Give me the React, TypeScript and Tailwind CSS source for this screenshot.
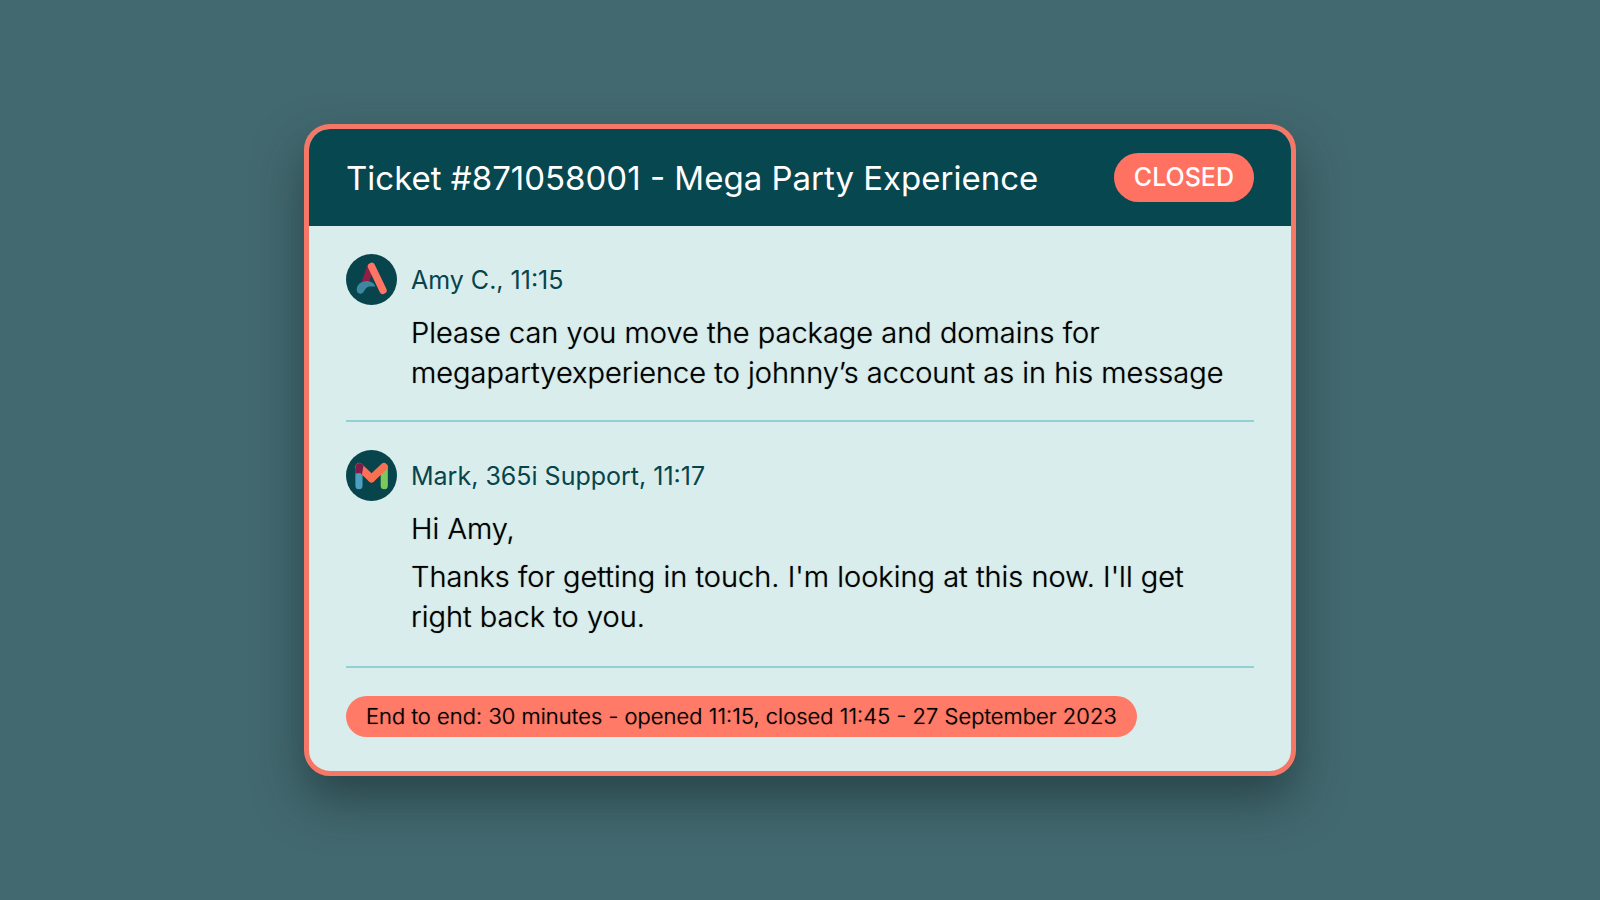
import type { ReactNode } from "react";

function AmyLogo() {
  return (
    <svg viewBox="0 0 50 50" className="size-[51px] shrink-0" role="img" aria-label="Amy C.">
      <circle cx="25" cy="25" r="25" fill="#07444c" />
      <path d="M24 13 L18 30" stroke="#8f1f45" strokeWidth="7" strokeLinecap="round" fill="none" />
      <path
        d="M10.6 36 C9.8 29.5 16 26 22 26.6 C25 27 27.5 28.5 28.8 31.5 C26 32.5 23.5 31.3 21.3 32.3 C18.5 33.6 18.5 36 16.5 38 C14.5 39.8 11 38.8 10.6 36 Z"
        fill="#3f87a0"
      />
      <path d="M25 12.2 L36.3 35.6" stroke="#ff7563" strokeWidth="7.2" strokeLinecap="round" fill="none" />
    </svg>
  );
}

function MarkLogo() {
  return (
    <svg viewBox="0 0 50 50" className="size-[51px] shrink-0" role="img" aria-label="Mark">
      <circle cx="25" cy="25" r="25" fill="#07444c" />
      <path d="M12.7 17 V35" stroke="#4d9fc0" strokeWidth="7" strokeLinecap="round" fill="none" />
      <path d="M37.5 17 V35" stroke="#7cc85f" strokeWidth="7" strokeLinecap="round" fill="none" />
      <path d="M13 16.5 L25 28" stroke="#ff705a" strokeWidth="7.4" strokeLinecap="round" fill="none" />
      <path d="M25 28 L37.2 16.5" stroke="#f8704f" strokeWidth="7.4" strokeLinecap="round" fill="none" />
      <path d="M9.2 23 V16.5 A3.8 3.8 0 0 1 15.5 13.8 L17.2 15.5 L15.6 24.3 L14 22.6 Z" fill="#7f1b48" />
    </svg>
  );
}

function Message({ logo, meta, children }: { logo: ReactNode; meta: string; children: ReactNode }) {
  return (
    <article>
      <header className="flex items-center gap-[14px]">
        {logo}
        <h2 className="pt-px text-[25px] leading-8 font-normal text-[#07444c]">{meta}</h2>
      </header>
      <div className="mt-2 ml-[65px] flex flex-col gap-2 pr-5 text-[29px] leading-10 font-light text-black [text-shadow:0_0_1px_rgba(0,0,0,0.6)]">{children}</div>
    </article>
  );
}

export default function App() {
  return (
    <main className="flex min-h-screen items-center justify-center bg-[#42696f] font-['Inter',sans-serif]">
      <section className="w-full max-w-[992px] overflow-hidden rounded-[26px] border-5 border-[#f67766] bg-[#d9edec] shadow-[0_24px_48px_rgba(20,40,45,0.55)]">
        <header className="flex items-center justify-between bg-[#074750] px-[37px] py-6">
          <h1 className="text-[33px] leading-10 font-normal text-white">Ticket #871058001 - Mega Party Experience</h1>
          <span className="rounded-full bg-[#ff7262] px-5 py-2 text-[25px] leading-[33px] font-medium text-white">CLOSED</span>
        </header>
        <div className="px-[37px] pt-7 pb-[34px]">
          <Message logo={<AmyLogo />} meta="Amy C., 11:15">
            <p>Please can you move the package and domains for megapartyexperience to johnny’s account as in his message</p>
          </Message>
          <hr className="mt-[27px] mb-7 border-t-2 border-[#93cfd3]" />
          <Message logo={<MarkLogo />} meta="Mark, 365i Support, 11:17">
            <p>Hi Amy,</p>
            <p>Thanks for getting in touch. I'm looking at this now. I'll get right back to you.</p>
          </Message>
          <hr className="mt-[29px] mb-7 border-t-2 border-[#93cfd3]" />
          <p className="w-fit rounded-full bg-[#ff7a67] px-5 py-1 text-[22px] leading-[33px] font-light text-black [text-shadow:0_0_1px_rgba(0,0,0,0.6)]">
            End to end: 30 minutes - opened 11:15, closed 11:45 - 27 September 2023
          </p>
        </div>
      </section>
    </main>
  );
}
